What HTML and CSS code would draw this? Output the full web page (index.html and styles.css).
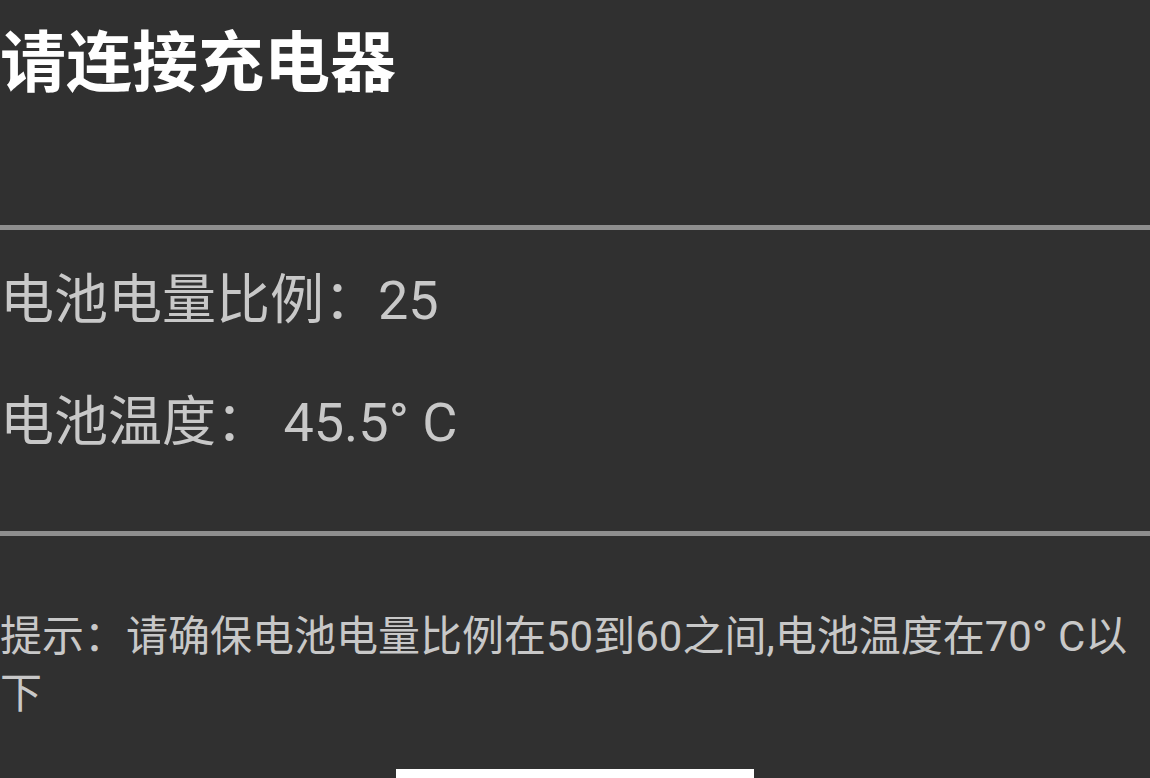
FILE: index.html
```html
<!DOCTYPE html>
<html lang="zh-CN">
<head>
  <meta charset="UTF-8" />
  <meta name="viewport" content="width=device-width, initial-scale=1.0"/>
  <title>电池状态</title>
  <link rel="stylesheet" href="styles.css">
</head>
<body>

<div class="screen">
  <!-- Header -->
  <div class="header">
    <h1 class="title">请连接充电器</h1>
  </div>

  <div class="divider"></div>

  <!-- Battery info -->
  <div class="stats">
    <p class="stat">电池电量比例：25</p>
    <p class="stat">电池温度： 45.5° C</p>
  </div>

  <div class="divider"></div>

  <!-- Hint -->
  <p class="hint">提示：请确保电池电量比例在50到60之间,电池温度在70° C以下</p>

  <div class="button-wrapper">
    <button class="action" type="button"></button>
  </div>
</div>

</body>
</html>
```

FILE: styles.css
```css
* {
  box-sizing: border-box;
}

body {
  margin: 0;
  padding: 0;
  background: #303030;
  font-family: Roboto, "Noto Sans CJK SC", sans-serif;
  overflow: hidden;
}

.screen {
  display: flex;
  flex-direction: column;
}

.header {
  height: 225px;
  padding-top: 31px;
}

.title {
  margin: 0;
  font-size: 66px;
  line-height: 66px;
  font-weight: bold;
  color: #ffffff;
}

.divider {
  height: 5px;
  background: #8e8e8e;
}

.stats {
  height: 301px;
  padding-top: 44px;
}

.stat {
  margin: 0 0 68px;
  font-size: 54px;
  line-height: 54px;
  color: #c8c8c8;
}

.hint {
  margin: 72px 0 0;
  font-size: 42px;
  line-height: 57px;
  color: #c8c8c8;
}

.button-wrapper {
  display: flex;
  justify-content: center;
  margin-top: 47px;
}

.action {
  width: 358px;
  height: 60px;
  border: none;
  border-radius: 0;
  background: #ffffff;
}
```
